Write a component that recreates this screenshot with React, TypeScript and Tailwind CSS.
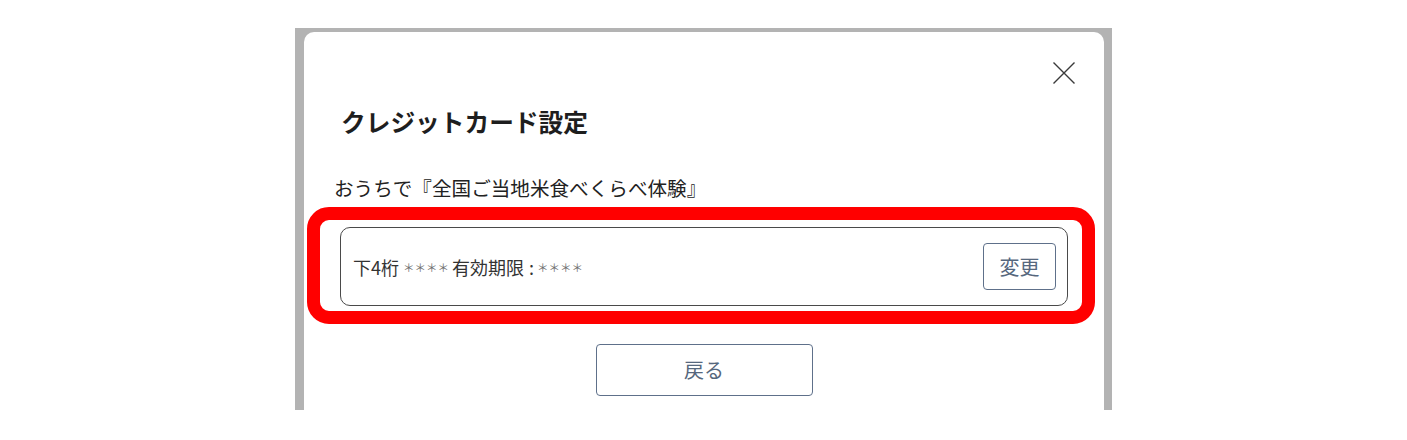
import React from "react";

const jp = { fontFamily: '"Noto Sans CJK JP", "Noto Sans", sans-serif' };

export default function App() {
  return (
    <div className="w-[1407px] h-[440px] bg-white overflow-hidden" style={jp}>
      <div className="pt-[28px] flex justify-center">
        <div className="w-[817px] h-[382px] bg-[#b3b3b3] pl-[9px] pr-[8px] pt-[4px]">
          <div className="relative w-[800px] h-[378px] bg-white rounded-t-[10px]">
            <div className="pt-[30px] flex justify-end pr-[29px]">
              <svg width="22" height="22" viewBox="0 0 22 22" className="block">
                <path d="M0.5 0.5 L21.5 21.5 M21.5 0.5 L0.5 21.5" stroke="#3a3a3a" strokeWidth="1.4" fill="none" />
              </svg>
            </div>
            <div className="mt-[21px] pl-[37px] h-[32px] leading-[32px] text-[24.7px] font-bold text-[#1e1e1e]">
              クレジットカード設定
            </div>
            <div className="mt-[37px] pl-[30px] h-[28px] leading-[28px] text-[19.6px] text-[#222]">
              おうちで『全国ご当地米食べくらべ体験』
            </div>
            <div className="mt-[25px] mx-[36px] h-[79px] border border-[#4a4a4a] rounded-[10px] flex items-center justify-between pl-[12px] pr-[11px]">
              <div className="text-[18px] text-[#333] leading-[24px] flex items-center">
                <span>下4桁</span>
                <span className="ml-[4px] text-[11.5px] leading-[24px] text-[#6e6e6e]">＊＊＊＊</span>
                <span className="ml-[3px]">有効期限</span>
                <span className="ml-[5px]">:</span>
                <span className="ml-[3px] text-[11.5px] leading-[24px] text-[#6e6e6e]">＊＊＊＊</span>
              </div>
              <button className="w-[73px] h-[47px] border border-[#5e708a] rounded-[4px] text-[20px] text-[#56677d] flex items-center justify-center">
                変更
              </button>
            </div>
            <div className="mt-[38px] flex justify-center">
              <button className="w-[217px] h-[52px] border border-[#5e708a] rounded-[4px] text-[20px] text-[#56677d] flex items-center justify-center">
                戻る
              </button>
            </div>
            <div className="absolute left-[3px] top-[175px] w-[788px] h-[117px] border-[13px] border-[#ff0000] rounded-[22px] pointer-events-none" />
          </div>
        </div>
      </div>
    </div>
  );
}
